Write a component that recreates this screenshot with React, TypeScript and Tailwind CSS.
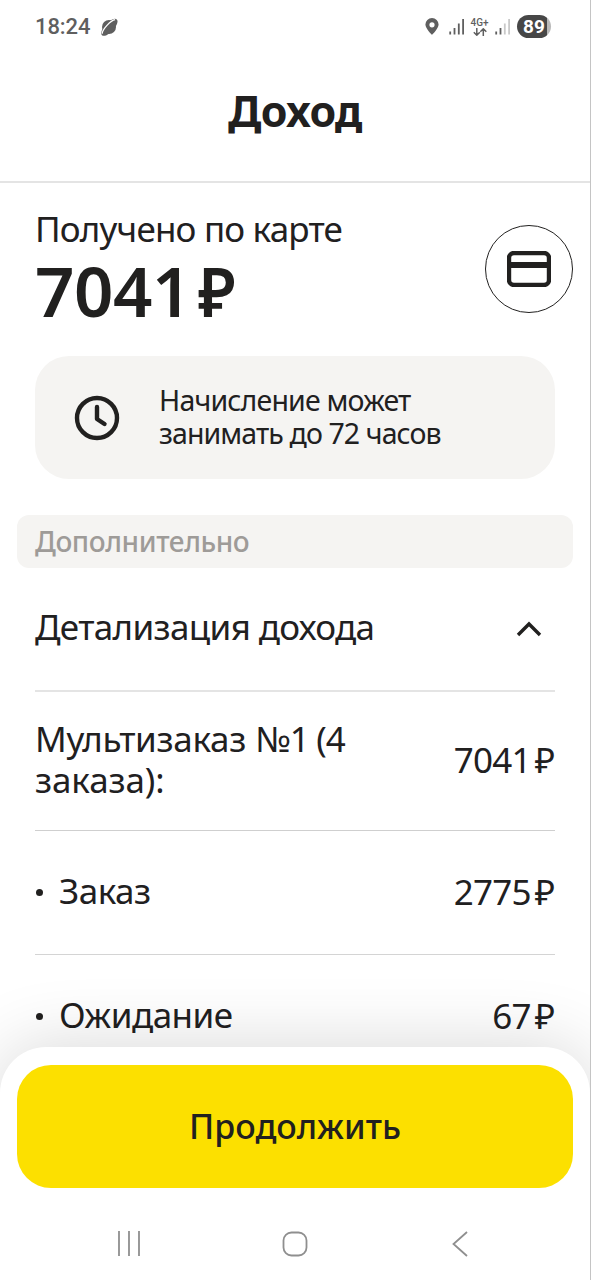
import type { ReactNode } from 'react';

interface IncomeItem {
  label: string;
  amount: string;
}

const items: IncomeItem[] = [
  { label: 'Заказ', amount: '2775' },
  { label: 'Ожидание', amount: '67' },
];

function SignalIcon({ weak = false }: { weak?: boolean }) {
  const faded = weak ? '#c9c9c9' : '#5f5f5f';
  return (
    <svg width="16" height="17" viewBox="0 0 16 17" fill="none" strokeWidth="1.8">
      <path d="M1.2 13.5v3M5.500 10v6.5" stroke="#5f5f5f" />
      <path d="M9.8 5.5v11M14.1 1v15.5" stroke={faded} />
    </svg>
  );
}

function StatusBar() {
  return (
    <div className="flex h-[53px] shrink-0 items-center pr-[39px] pl-[35px] text-[#5f5f5f]">
      <span className="font-[Roboto,sans-serif] text-[22px] leading-none font-medium tracking-[-0.1px]">18:24</span>
      <svg className="ml-[10px]" width="18" height="18" viewBox="0 0 18 18">
        <circle cx="9" cy="9" r="7" fill="#5f5f5f" />
        <g transform="rotate(-47 9 9)">
          <ellipse cx="9" cy="9.500" rx="10.8" ry="4.600" fill="#5f5f5f" />
          <path d="M-.6 8.600C2.500 5.800 15 5.600 18.600 8.400" fill="none" stroke="#fff" strokeWidth="1.3" />
        </g>
      </svg>

      <div className="ml-auto flex items-center">
        <svg width="14" height="17" viewBox="0 0 14 17">
          <path
            fillRule="evenodd"
            d="M7 0a6.6 6.6 0 0 0-6.6 6.6C.4 10.6 7 17 7 17s6.6-6.4 6.6-10.4A6.6 6.6 0 0 0 7 0Zm0 4.2a2.600 2.600 0 1 1 0 5.2 2.600 2.600 0 0 1 0-5.2Z"
            fill="#5f5f5f"
          />
        </svg>
        <span className="ml-[10px]">
          <SignalIcon />
        </span>
        <span className="ml-[5px] flex w-[19px] flex-col items-center">
          <span className="font-[Roboto,sans-serif] text-[10px] leading-[10px] font-medium">4G+</span>
          <svg width="14" height="8" viewBox="0 0 14 8" fill="none" stroke="#5f5f5f" strokeWidth="1.5">
            <path d="M3.8 0v7M.8 4.2l3 3 3-3M10.3 8V1M7.3 3.8l3-3 3 3" />
          </svg>
        </span>
        <span className="ml-[6px]">
          <SignalIcon weak />
        </span>
        <span className="ml-[6px] flex h-[23px] w-[34px] items-center justify-center rounded-full bg-[linear-gradient(to_right,#474747_89%,#b9b9b9_89%)] font-[Roboto,sans-serif] text-[19px] leading-none font-bold text-white">
          89
        </span>
      </div>
    </div>
  );
}

function Row({ children, className }: { children: ReactNode; className: string }) {
  return <div className={`mx-[35px] flex shrink-0 items-center justify-between ${className}`}>{children}</div>;
}

function Amount({ value }: { value: string }) {
  return (
    <span className="flex">
      <span className="tracking-[-0.8px]">{value}</span>
      <span className="ml-[4px]">₽</span>
    </span>
  );
}

export default function App() {
  return (
    <div className="relative flex h-[1280px] w-[591px] flex-col overflow-hidden border-r border-[#c4c4c4] bg-white font-['Noto_Sans','Open_Sans',sans-serif] text-[#21201f]">
      <StatusBar />

      <header className="flex h-[130px] shrink-0 justify-center border-b-2 border-[#e4e4e4] pt-[28px]">
        <h1 className="text-[43px] leading-[60px] font-bold tracking-[-0.6px]">Доход</h1>
      </header>

      <section className="flex h-[173px] shrink-0 items-start justify-between pt-[26px] pr-[17px] pl-[35px]">
        <div className="flex flex-col">
          <span className="text-[35px] leading-[40px] tracking-[-0.8px]">Получено по карте</span>
          <span className="flex text-[69px] leading-[82px] font-semibold">
            <span className="tracking-[-0.5px]">7041</span>
            <span className="ml-[7px] origin-left scale-x-92">₽</span>
          </span>
        </div>
        <button className="mt-[16px] flex size-[88px] items-center justify-center rounded-full border border-[#21201f]">
          <svg width="44" height="36" viewBox="0 0 44 36" fill="none" stroke="#21201f">
            <rect x="2" y="2" width="40" height="32" rx="5" strokeWidth="4.400" />
            <path d="M2 14h40" strokeWidth="6" />
          </svg>
        </button>
      </section>

      <div className="mx-[35px] flex h-[123px] shrink-0 items-center rounded-[34px] bg-[#f5f4f2] pl-[39px]">
        <svg width="46" height="46" viewBox="0 0 46 46" fill="none" stroke="#21201f" strokeWidth="4.400">
          <circle cx="23" cy="23" r="20" />
          <path d="M23 12v12l7.5 5" strokeLinecap="round" strokeLinejoin="round" />
        </svg>
        <p className="mb-[2px] ml-[39px] text-[28.5px] leading-[33px] tracking-[-0.8px]">
          Начисление может
          <br />
          <span className="tracking-[-0.9px]">занимать до 72 часов</span>
        </p>
      </div>

      <div className="mx-[17px] mt-[36px] flex h-[53px] shrink-0 items-center rounded-[12px] bg-[#f5f4f2] pb-[2px] pl-[18px] text-[28px] font-medium tracking-[-0.4px] text-[#9e9b98]">
        Дополнительно
      </div>

      <Row className="h-[124px] border-b-2 border-[#e4e4e4] pr-[13px]">
        <span className="pb-[4px] text-[35px] tracking-[-0.65px]">Детализация дохода</span>
        <svg width="26" height="16" viewBox="0 0 26 16" fill="none" stroke="#21201f" strokeWidth="3.4">
          <path d="M2 14 13 3l11 11" />
        </svg>
      </Row>

      <Row className="h-[139px] border-b border-[#cfcfcf] pb-[3px] text-[35px] leading-[41px]">
        <span className="w-[330px] pb-[2px]">
          <span className="tracking-[-0.3px]">Мультизаказ</span> <span className="tracking-[-1.2px]">№1 (4</span>
          <br />
          <span className="tracking-[-0.1px]">заказа):</span>
        </span>
        <Amount value="7041" />
      </Row>

      {items.map((item) => (
        <Row key={item.label} className="h-[124px] border-b border-[#d4d4d4] pb-[3px] text-[35px] leading-[41px]">
          <span className="flex items-center pb-[2px]">
            <span className="mt-[5px] mr-[16px] ml-[1px] size-[7px] rounded-full bg-[#21201f]" />
            <span className="tracking-[-0.5px]">{item.label}</span>
          </span>
          <Amount value={item.amount} />
        </Row>
      ))}

      {/* Нижняя панель поверх списка */}
      <div className="absolute inset-x-0 bottom-0 flex h-[233px] flex-col rounded-t-[46px] bg-white px-[17px] pt-[18px] shadow-[0_0_72px_rgba(0,0,0,0.16)]">
        <button className="h-[123px] shrink-0 rounded-[34px] bg-[#fce000] text-[34px] font-medium">Продолжить</button>
        <nav className="flex h-[92px] items-center justify-between pt-[20px] pr-[104px] pl-[100px]">
          <svg width="24" height="26" viewBox="0 0 24 26" stroke="#8f8f8f" strokeWidth="1.8">
            <path d="M2 0v25M12 0v25M22 0v25" />
          </svg>
          <svg className="-ml-[3px]" width="26" height="26" viewBox="0 0 26 26" fill="none" stroke="#8f8f8f" strokeWidth="1.8">
            <rect x="1.5" y="1.5" width="23" height="23" rx="8" />
          </svg>
          <svg width="18" height="26" viewBox="0 0 18 26" fill="none" stroke="#8f8f8f" strokeWidth="1.8">
            <path d="M16 1 2.5 13 16 25" />
          </svg>
        </nav>
      </div>
    </div>
  );
}
